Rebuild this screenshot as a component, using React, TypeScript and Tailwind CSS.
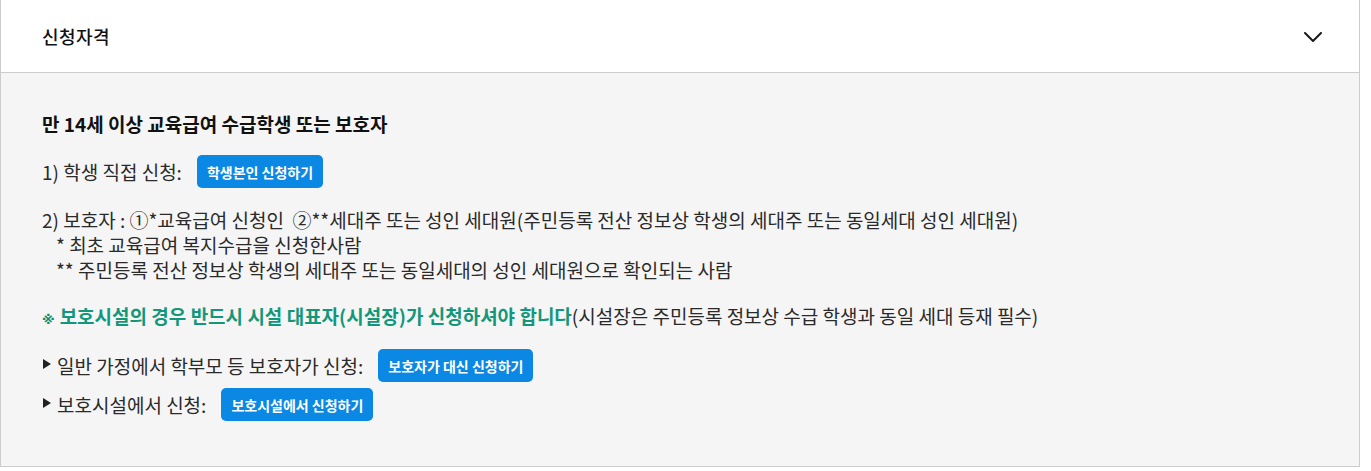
function Btn({ children }: { children: React.ReactNode }) {
  return (
    <button
      type="button"
      className="ml-[15px] h-[33px] rounded-[5px] bg-[#0a88e4] px-[10px] text-[14px] font-bold leading-none text-white"
    >
      {children}
    </button>
  );
}

function Arrow() {
  return (
    <svg width="8" height="10" viewBox="0 0 8 10" className="ml-[1px] mr-[6px] mt-[-3px] shrink-0">
      <polygon points="0,0 8,5 0,10" fill="#222" />
    </svg>
  );
}

export default function App() {
  return (
    <div className="w-[1360px] bg-white font-['Noto_Sans_CJK_KR',sans-serif] text-[#2a2a2a]">
      <div className="border-x border-b border-[#cccccc]">
        <div className="flex h-[73px] items-center justify-between border-b border-[#cccccc] pl-[41px] pr-[37px]">
          <h2 className="text-[18px] font-medium tracking-[0.4px] text-[#111]">신청자격</h2>
          <svg width="18" height="10" viewBox="0 0 18 10" fill="none" className="mt-[1px]">
            <path d="M1 1L9 9L17 1" stroke="#1a1a1a" strokeWidth="2" strokeLinecap="round" strokeLinejoin="round" />
          </svg>
        </div>
        <div className="bg-[#f5f5f5] pb-[45px] pl-[41px] pt-[38px] text-[19px] leading-[25px]">
          <p className="text-[19px] font-bold text-[#111]">만 14세 이상 교육급여 수급학생 또는 보호자</p>
          <div className="mt-[19px] flex items-center">
            <span>1) 학생 직접 신청:</span>
            <Btn>학생본인 신청하기</Btn>
          </div>
          <div className="mt-[19px]">
            <p>2) 보호자 : ①*교육급여 신청인 &nbsp;②**세대주 또는 성인 세대원(주민등록 전산 정보상 학생의 세대주 또는 동일세대 성인 세대원)</p>
            <p className="pl-[14px]">* 최초 교육급여 복지수급을 신청한사람</p>
            <p className="pl-[14px]">** 주민등록 전산 정보상 학생의 세대주 또는 동일세대의 성인 세대원으로 확인되는 사람</p>
          </div>
          <p className="mt-[21px]">
            <span className="font-bold text-[#13977a]">
              <span className="mr-[5px] font-['DejaVu_Sans',sans-serif] text-[13px] font-bold text-[#0f8a6c]">※</span>보호시설의 경우 반드시 시설 대표자(시설장)가 신청하셔야 합니다
            </span>
            (시설장은 주민등록 정보상 수급 학생과 동일 세대 등재 필수)
          </p>
          <div className="mt-[17px] flex items-center">
            <Arrow />
            <span>일반 가정에서 학부모 등 보호자가 신청:</span>
            <Btn>보호자가 대신 신청하기</Btn>
          </div>
          <div className="mt-[6px] flex items-center">
            <Arrow />
            <span>보호시설에서 신청:</span>
            <Btn>보호시설에서 신청하기</Btn>
          </div>
        </div>
      </div>
    </div>
  );
}
